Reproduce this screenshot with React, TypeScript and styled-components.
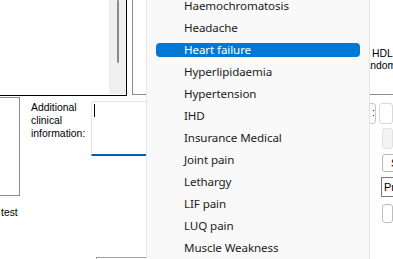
import styled, { createGlobalStyle } from "styled-components";

const GlobalStyle = createGlobalStyle`
  html, body {
    margin: 0;
    padding: 0;
    background: #ffffff;
  }
`;

const Screen = styled.div`
  position: relative;
  width: 393px;
  height: 259px;
  overflow: hidden;
  background: #ffffff;
  font-family: "Liberation Sans", Arial, sans-serif;
  font-size: 10.4px;
  line-height: 13px;
  color: #000000;
`;

const TopRow = styled.div`
  display: flex;
  align-items: flex-start;
  gap: 5px;
  margin: -1px 0 0 -1px;
`;

const NotesBox = styled.div`
  box-sizing: border-box;
  display: flex;
  justify-content: flex-end;
  width: 128px;
  height: 97px;
  border: 1px solid #000000;
  background: #ffffff;
  flex-shrink: 0;
`;

const ScrollTrack = styled.div`
  display: flex;
  justify-content: center;
  width: 17px;
  height: 94px;
  background: #f0f0f0;
`;

const ScrollThumb = styled.div`
  width: 2px;
  height: 63px;
  border-radius: 1px;
  background: #8a8a8a;
`;

const ResultsBox = styled.div`
  box-sizing: border-box;
  display: flex;
  flex-direction: column;
  flex: 1;
  height: 96px;
  margin-right: -20px;
  padding-top: 48px;
  border: 1px solid #8c8c8c;
`;

const ResultLabel = styled.div<{ indent: number }>`
  margin-left: ${(p) => p.indent}px;
  line-height: 12px;
  white-space: nowrap;
`;

const MiddleRow = styled.div`
  display: flex;
  align-items: flex-start;
  width: 394px;
  margin-left: -1px;
`;

const SideCol = styled.div`
  display: flex;
  flex-direction: column;
  width: 21px;
  flex-shrink: 0;
`;

const SideBox = styled.div`
  box-sizing: border-box;
  width: 21px;
  height: 99px;
  margin-top: 1px;
  border: 1px solid #8c8c8c;
`;

const SideText = styled.div`
  margin: 10px 0 0 2px;
`;

const FieldLabel = styled.div`
  width: 60px;
  margin: 5px 0 0 11px;
  flex-shrink: 0;
`;

const InfoCol = styled.div`
  display: flex;
  flex-direction: column;
  width: 200px;
  margin-top: 5px;
  flex-shrink: 0;
`;

const InfoBox = styled.div`
  box-sizing: border-box;
  height: 55px;
  padding: 2px 0 0 2px;
  border: 1px solid #e5e5e5;
  border-bottom: 2px solid #005fb8;
  border-radius: 3px 3px 0 0;
  background: #ffffff;
`;

const Caret = styled.div`
  width: 1px;
  height: 13px;
  background: #000000;
`;

const LowerBox = styled.div`
  box-sizing: border-box;
  height: 20px;
  margin: 101px 0 0 5px;
  border: 1px solid #a0a0a0;
`;

const RightCol = styled.div`
  display: flex;
  flex-direction: column;
  width: 25px;
  margin: 7px 0 0 auto;
  flex-shrink: 0;
`;

const ControlRow = styled.div<{ top: number; indent?: number }>`
  display: flex;
  gap: 3px;
  margin-top: ${(p) => p.top}px;
  margin-left: ${(p) => p.indent ?? 0}px;
`;

const SmallButton = styled.div`
  box-sizing: border-box;
  width: 10px;
  height: 21px;
  padding-left: 3px;
  border: 1px solid #c6c6c6;
  border-radius: 3px;
  background: #fdfdfd;
  color: #1a1a6a;
  line-height: 18px;
`;

const Control = styled.div<{
  h: number;
  fill?: string;
  edge?: string;
  radius?: number;
}>`
  box-sizing: border-box;
  width: 40px;
  height: ${(p) => p.h}px;
  padding-left: ${(p) => (p.radius === 0 ? 2 : 8)}px;
  border: 1px solid ${(p) => p.edge ?? "#d9d9d9"};
  border-radius: ${(p) => p.radius ?? 3}px;
  background: ${(p) => p.fill ?? "#ffffff"};
  font-size: 11px;
  line-height: ${(p) => p.h - 2}px;
  white-space: nowrap;
`;

const Dropdown = styled.div`
  position: absolute;
  left: 146px;
  top: -5px;
  bottom: 0;
  box-sizing: border-box;
  width: 224px;
  border-left: 1px solid #e6e6e6;
  border-right: 1px solid #e3e3e3;
  background: #f9f9f9;
  font-family: "Noto Sans", "Open Sans", sans-serif;
  font-size: 11.6px;
  letter-spacing: -0.1px;
`;

const Option = styled.div`
  display: flex;
  align-items: center;
  height: 22px;
  padding-left: 9px;
`;

const OptionPill = styled.div<{ selected: boolean }>`
  box-sizing: border-box;
  width: 204px;
  height: 14px;
  padding-left: 28px;
  border-radius: 4px;
  background: ${(p) => (p.selected ? "#0078d4" : "transparent")};
  color: ${(p) => (p.selected ? "#ffffff" : "#1b1b1b")};
  line-height: 14px;
  white-space: nowrap;
`;

const options = [
  "Haemochromatosis",
  "Headache",
  "Heart failure",
  "Hyperlipidaemia",
  "Hypertension",
  "IHD",
  "Insurance Medical",
  "Joint pain",
  "Lethargy",
  "LIF pain",
  "LUQ pain",
  "Muscle Weakness",
];

const selected = "Heart failure";

const App = () => {
  return (
    <>
      <GlobalStyle />
      <Screen>
        <TopRow>
          <NotesBox>
            <ScrollTrack>
              <ScrollThumb />
            </ScrollTrack>
          </NotesBox>
          <ResultsBox>
            <ResultLabel indent={239}>HDL</ResultLabel>
            <ResultLabel indent={224}>Random</ResultLabel>
          </ResultsBox>
        </TopRow>

        <MiddleRow>
          <SideCol>
            <SideBox />
            <SideText>test</SideText>
          </SideCol>
          <FieldLabel>
            Additional
            <br />
            clinical
            <br />
            information:
          </FieldLabel>
          <InfoCol>
            <InfoBox>
              <Caret />
            </InfoBox>
            <LowerBox />
          </InfoCol>
          <RightCol>
            <ControlRow top={0}>
              <SmallButton>:</SmallButton>
              <Control h={21} />
            </ControlRow>
            <ControlRow top={4} indent={14}>
              <Control h={21} fill="#f3f3f3" edge="#e2e2e2" />
            </ControlRow>
            <ControlRow top={5} indent={14}>
              <Control h={18} edge="#b8b8b8">
                Save
              </Control>
            </ControlRow>
            <ControlRow top={5} indent={13}>
              <Control h={20} edge="#7a7a7a" radius={0}>
                Pr
              </Control>
            </ControlRow>
            <ControlRow top={7} indent={14}>
              <Control h={19} edge="#bdbdbd" />
            </ControlRow>
          </RightCol>
        </MiddleRow>

        <Dropdown>
          {options.map((name) => (
            <Option key={name}>
              <OptionPill selected={name === selected}>{name}</OptionPill>
            </Option>
          ))}
        </Dropdown>
      </Screen>
    </>
  );
};

export default App;
